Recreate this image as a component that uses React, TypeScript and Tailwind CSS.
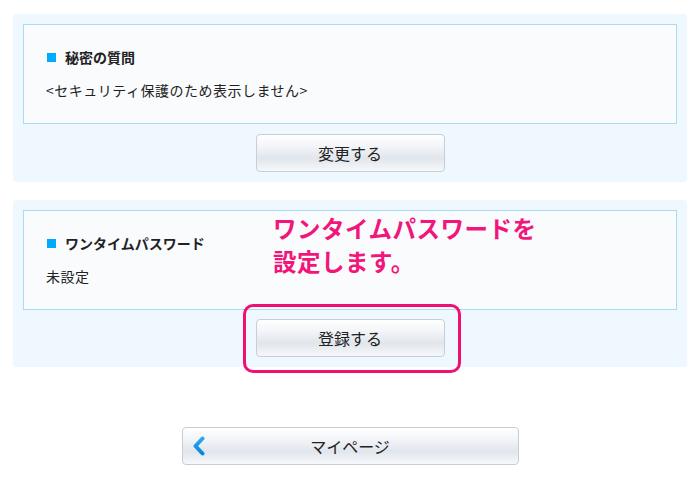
import React from "react";

const font = { fontFamily: '"Noto Sans CJK JP", "Noto Sans", sans-serif' };

function Btn({ label, className = "" }: { label: string; className?: string }) {
  return (
    <div
      className={`flex h-[38px] items-center justify-center rounded-[4px] border border-[#c9ced6] bg-[linear-gradient(to_bottom,#ffffff_0%,#f3f5f8_30%,#e1e6ec_65%,#f6f8fa_100%)] text-[16px] text-[#222] ${className}`}
    >
      {label}
    </div>
  );
}

function InfoBox({ title, text }: { title: string; text: string }) {
  return (
    <div className="flex h-[100px] flex-col justify-center gap-[13px] border border-[#a9dcf2] bg-[#f9fbfd] pb-[1px] pl-[22px]">
      <div className="flex h-[20px] items-center gap-[9px] pl-[1px]">
        <span className="block h-[9px] w-[9px] bg-[#00aaff]" />
        <span className="text-[14px] font-bold text-[#222]">{title}</span>
      </div>
      <div className="flex h-[20px] items-center text-[14px] tracking-[0.5px] text-[#222]">{text}</div>
    </div>
  );
}

export default function App() {
  return (
    <div className="min-h-[493px] w-[697px] bg-white pt-[14px]" style={font}>
      <div className="ml-[13px] w-[674px] rounded-[4px] bg-[#eef8fe] px-[10px] pb-[10px] pt-[10px]">
        <InfoBox title="秘密の質問" text="<セキュリティ保護のため表示しません>" />
        <div className="mt-[10px] flex justify-center">
          <Btn label="変更する" className="w-[189px]" />
        </div>
      </div>

      <div className="relative ml-[13px] mt-[18px] w-[674px] rounded-[4px] bg-[#eef8fe] px-[10px] pb-[10px] pt-[10px]">
        <InfoBox title="ワンタイムパスワード" text="未設定" />
        <div className="mt-[9px] flex justify-center">
          <Btn label="登録する" className="w-[189px]" />
        </div>
        <div className="absolute left-[260px] top-[12px] text-[23.5px] font-bold leading-[33px] tracking-[0.5px] text-[#f2157a]">
          ワンタイムパスワードを
          <br />
          設定します。
        </div>
        <div className="absolute left-[230px] top-[104px] h-[69px] w-[218px] rounded-[10px] border-[3px] border-[#f20f73]" />
      </div>

      <div className="mt-[60px] flex justify-center pl-[3px]">
        <div className="relative w-[337px]">
          <Btn label="マイページ" className="h-[37px] w-full" />
          <svg
            className="absolute left-[10px] top-[9px]"
            width="14"
            height="20"
            viewBox="0 0 14 20"
          >
            <defs>
              <linearGradient id="chev" x1="0" y1="0" x2="0" y2="1">
                <stop offset="0" stopColor="#2aa8f0" />
                <stop offset="1" stopColor="#0a86d8" />
              </linearGradient>
            </defs>
            <polyline
              points="10.5,2.5 3.5,10 10.5,17.5"
              fill="none"
              stroke="url(#chev)"
              strokeWidth="4"
              strokeLinecap="round"
              strokeLinejoin="round"
            />
          </svg>
        </div>
      </div>
    </div>
  );
}
